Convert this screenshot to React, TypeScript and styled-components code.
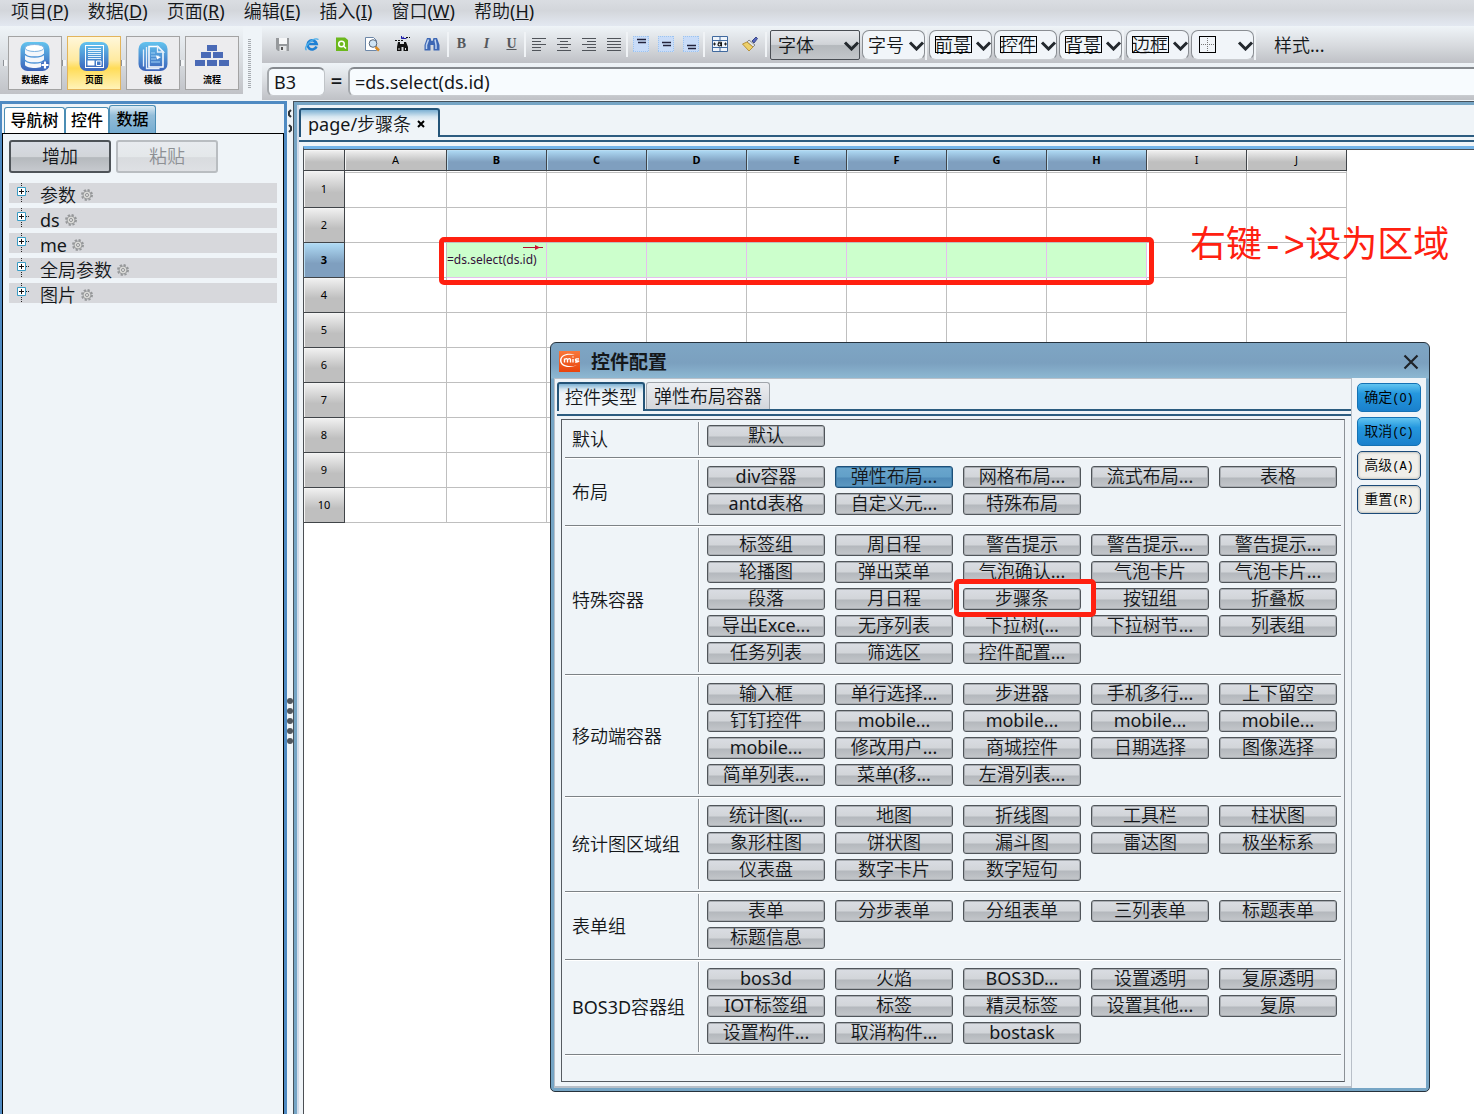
import React from 'react';
import styled, { createGlobalStyle, css } from 'styled-components';

const UI_FONT = `'Noto Sans', 'Noto Sans CJK SC DemiLight', 'Noto Sans CJK SC', sans-serif`;
const BOLD_FONT = `'Noto Sans', 'Noto Sans CJK SC', sans-serif`;
const pane = '#eff4f8';

const Global = createGlobalStyle`
  * { box-sizing: border-box; }
  body { margin: 0; background: #fff; color: #14171a; font: 400 18px/24px ${UI_FONT}; }
  button, input, select { font: inherit; color: inherit; margin: 0; padding: 0; }
  button { cursor: pointer; }
`;

const Page = styled.div`
  position: relative;
  display: flex;
  flex-direction: column;
  min-height: 100vh;
  overflow: hidden;
  background: ${pane};
`;

/* ---------- menu ---------- */
const MenuBar = styled.nav`
  display: flex;
  gap: 19px;
  height: 26px;
  padding: 0 11px 4px;
  background: linear-gradient(#dadde2, #d3d6db 40%, #e3e8f1);
`;
const MenuItem = styled.button`
  border: 0;
  background: none;
  line-height: 22px;
  white-space: nowrap;
`;

/* ---------- toolbars ---------- */
const Bars = styled.div`
  display: flex;
  height: 75px;
`;
const MainBar = styled.div`
  display: flex;
  gap: 5px;
  width: 243px;
  height: 68px;
  padding: 10px 0 0 8px;
  background: linear-gradient(#eff4f8, #d9dde1 50%, #c0c2c7);
`;
const BigButton = styled.button<{ $on?: boolean }>`
  position: relative;
  display: flex;
  flex-direction: column;
  align-items: center;
  width: 54px;
  height: 54px;
  padding-top: 4px;
  border: 1px solid ${p => (p.$on ? '#e2b45c' : '#a3a3a3')};
  background: ${p => (p.$on ? 'linear-gradient(#fff7da, #ffeaa0 45%, #ffdc58 60%, #fff3b8)' : '#ececee')};
  color: #000;
  font-family: ${BOLD_FONT};
  font-size: 9px;
  font-weight: 700;
  line-height: 14px;
  &::before {
    content: '';
    position: absolute;
    left: -6px;
    top: 23px;
    width: 3px;
    height: 6px;
    border-left: 1px solid #8e9297;
    background: #f4f6f8;
  }
`;
const Grip = styled.div`
  width: 19px;
  padding: 13px 0 0 5px;
  &::before {
    content: '';
    display: block;
    width: 3px;
    height: 49px;
    background: repeating-linear-gradient(#a6abb0 0 1px, transparent 1px 2px);
  }
`;
const RightBars = styled.div`
  flex: 1;
  min-width: 0;
`;
const FormatBar = styled.div`
  display: flex;
  align-items: center;
  height: 37px;
  padding-left: 5px;
  white-space: nowrap;
  background: linear-gradient(#eff4f8, #d9dce0 50%, #bfc1c6);
`;
const ToolButton = styled.button<{ $wide?: boolean }>`
  flex: none;
  display: flex;
  align-items: center;
  justify-content: center;
  width: ${p => (p.$wide ? 30 : 25)}px;
  height: 28px;
  padding-bottom: 2px;
  border: 0;
  background: none;
`;
const Sep = styled.span`
  flex: none;
  width: 2px;
  height: 25px;
  background: #f0f3f6;
`;
const Picks = styled.div`
  display: flex;
  align-items: center;
  gap: 2px;
  margin-left: 3px;
`;
const PickBox = styled.label<{ $dark?: boolean }>`
  position: relative;
  display: block;
  width: ${p => (p.$dark ? 90 : 63)}px;
  height: 30px;
  select {
    appearance: none;
    width: 100%;
    height: 30px;
    padding-left: ${p => (p.$dark ? 7 : 5)}px;
    line-height: 24px;
    border: ${p => (p.$dark ? '1px solid #4a4e54' : '1px solid #8a8e93')};
    border-radius: ${p => (p.$dark ? 2 : 7)}px;
    background: ${p => (p.$dark ? 'linear-gradient(#e6e8ec, #d0d3d7 48%, #b5b9bd 52%, #c3c6ca)' : '#f1f5f9')};
    border-bottom-color: ${p => (p.$dark ? '#4a4e54' : '#c9ccd0')};
    outline: 0;
  }
  svg { position: absolute; right: 0; top: 11px; pointer-events: none; }
`;
const Swatch = styled.i<{ $grid?: boolean }>`
  position: absolute;
  left: ${p => (p.$grid ? 8 : 6)}px;
  top: 6px;
  width: ${p => (p.$grid ? 17 : 37)}px;
  height: 17px;
  border: 1px solid #000;
  pointer-events: none;
  &::before, &::after {
    content: '';
    display: ${p => (p.$grid ? 'block' : 'none')};
    position: absolute;
  }
  &::before { left: 7px; top: 1px; bottom: 1px; border-left: 1px dotted #777; }
  &::after { top: 7px; left: 1px; right: 1px; border-top: 1px dotted #777; }
`;
const PickGroup = styled.div`
  display: flex;
  align-items: center;
  gap: 2px;
  border-right: 2px solid #f0f3f6;
`;
const StyleButton = styled.button`
  margin-left: 18px;
  border: 0;
  background: none;
`;
const FormulaBar = styled.div`
  display: flex;
  align-items: center;
  height: 37px;
  padding: 0 0 1px 5px;
  background: linear-gradient(#eff4f8, #d9dce0 50%, #bfc1c6);
`;
const fieldLook = css`
  height: 29px;
  border: 2px solid #8a8e93;
  border-width: 2px 1px 1px 2px;
  border-color: #85898e #c0c4c8 #c9ccd0 #a4a8ac;
  background: #f7fbfe;
  outline: 0;
`;
const CellName = styled.input`
  ${fieldLook}
  width: 58px;
  padding-left: 5px !important;
  border-radius: 6px;
`;
const Equals = styled.span`
  width: 23px;
  text-align: center;
  font-size: 20px;
  font-weight: 600;
`;
const Formula = styled.input`
  ${fieldLook}
  flex: 1;
  padding-left: 5px !important;
  border-right: 0;
  border-radius: 6px 0 0 6px;
`;

/* ---------- body ---------- */
const Body = styled.div`
  flex: 1;
  display: flex;
`;
const SidePanel = styled.aside`
  display: flex;
  flex-direction: column;
  width: 287px;
  border: solid #4f8ac2;
  border-width: 3px 3px 0 2px;
`;
const SideTabs = styled.div`
  display: flex;
  align-items: flex-end;
  height: 29px;
  padding-left: 2px;
`;
const SideTab = styled.button<{ $on?: boolean; $w: number }>`
  width: ${p => p.$w}px;
  height: ${p => (p.$on ? 28 : 26)}px;
  padding-bottom: 2px;
  border: 1px solid #4b8db4;
  border-bottom: 0;
  border-radius: 3px 3px 0 0;
  background: ${p => (p.$on ? 'linear-gradient(#dcebf4, #93bdd9 35%, #76acd0)' : '#fff')};
  color: #000;
  font-family: ${BOLD_FONT};
  font-size: 16px;
  font-weight: 500;
  line-height: 22px;
  white-space: nowrap;
`;
const SideBox = styled.div`
  flex: 1;
  padding: 6px 6px 0 6px;
  border: solid #000;
  border-width: 1px 1px 0;
`;
const SideActions = styled.div`
  display: flex;
  gap: 5px;
  margin-bottom: 10px;
`;
const SideAction = styled.button`
  width: 102px;
  height: 33px;
  padding-bottom: 2px;
  border: 2px solid #4e5358;
  border-radius: 3px;
  background: linear-gradient(#d8dce4, #d2d5d9 50%, #b5b9bd 54%, #c6c9ce);
  &:disabled {
    color: #8d9094;
    border-color: #b9bdc1;
    background: linear-gradient(#e8ebef, #e4e8ea 50%, #d8dbde 54%, #dee0e4);
  }
`;
const Tree = styled.ul`
  display: flex;
  flex-direction: column;
  gap: 5px;
  margin: 0;
  padding: 0;
  list-style: none;
`;
const TreeRow = styled.li`
  display: flex;
  height: 20px;
  padding-left: 8px;
  background: #d7d8dc;
  white-space: nowrap;
  svg.node { flex: none; margin-right: 9px; }
  svg.gear { margin: 6px 0 0 5px; }
`;
const Splitter = styled.div`
  position: relative;
  display: flex;
  flex-direction: column;
  align-items: center;
  justify-content: center;
  gap: 4px;
  width: 6px;
  padding-top: 226px;
  i { width: 6px; height: 6px; border-radius: 50%; background: #4f565e; }
`;
const SplitArrows = styled.svg`
  position: absolute;
  left: 0;
  top: 7px;
`;
const Editor = styled.main`
  flex: 1;
  min-width: 0;
  display: flex;
  flex-direction: column;
  padding: 3px 0 0 5px;
  border-top: 1px solid #46525c;
  border-left: 1px solid #46525c;
  box-shadow: inset 3px 3px #76a5c5, inset 5px 3px #d3dcea;
`;
const PageTabs = styled.div`
  height: 32px;
  padding-top: 3px;
  border-bottom: 2px solid #2c5c80;
`;
const PageTab = styled.div`
  display: flex;
  align-items: center;
  gap: 6px;
  width: 141px;
  height: 29px;
  padding-left: 7px;
  border: 2px solid #245478;
  border-bottom: 0;
  border-radius: 3px 3px 0 0;
  background: linear-gradient(#7db1d3, #d7e7f1 25%, ${pane} 40%);
  white-space: nowrap;
`;
const CloseTab = styled.button`
  display: flex;
  border: 0;
  background: none;
`;
const SheetFrame = styled.div`
  flex: 1;
  display: flex;
  margin-top: 3px;
  padding: 4px 0 0 4px;
  border-top: 2px solid #2c5c80;
`;
const Sheet = styled.div`
  flex: 1;
  padding-top: 1px;
  background: #fff;
  border-top: 3px solid #74b4e8;
  border-left: 1px solid #4b4f54;
  box-shadow: inset 0 1px #4b4f54;
`;
const Grid = styled.table`
  border-spacing: 0;
  table-layout: fixed;
  width: 1043px;
  color: #000;
  font-size: 11px;
  line-height: 14px;
`;
const head = (on?: boolean) => css`
  padding: 0;
  text-align: center;
  font-weight: ${on ? 700 : 400};
  border: solid #404448;
  border-width: 0 1px 1px 0;
  box-shadow: inset 1px 1px ${on ? '#b8dcf2' : '#f4f4f4'};
  background: ${on ? 'linear-gradient(#b0dcf6, #7f9fbf 60%)' : 'linear-gradient(#f2f2f2, #bfbfbf 60%)'};
`;
const ColHead = styled.th<{ $on?: boolean }>`
  ${p => head(p.$on)}
  height: 21px;
`;
const RowHead = styled.th<{ $on?: boolean }>`
  ${p => head(p.$on)}
  height: 35px;
`;
const GridRow = styled.tr<{ $first?: boolean }>`
  height: ${p => (p.$first ? 37 : 35)}px;
  td { ${p => p.$first && css`box-shadow: inset 0 1px #fff, inset 0 2px #bfbfbf;`} }
`;
const Cell = styled.td<{ $area?: boolean }>`
  position: relative;
  padding: 0;
  border: solid ${p => (p.$area ? '#e6bfee' : '#bfbfbf')};
  border-width: 0 1px 1px 0;
  background: ${p => (p.$area ? '#ccffcc' : '#fff')};
  color: #33103a;
  font-size: 12px;
  white-space: nowrap;
  svg { position: absolute; right: 3px; top: 1px; }
`;

/* ---------- annotations ---------- */
const Mark = styled.div<{ $x: number; $y: number; $w: number; $h: number }>`
  position: absolute;
  left: ${p => p.$x}px;
  top: ${p => p.$y}px;
  width: ${p => p.$w}px;
  height: ${p => p.$h}px;
  border: 5px solid #ff2010;
  border-radius: 5px;
  pointer-events: none;
`;
const Note = styled.div`
  position: absolute;
  left: 1190px;
  top: 224px;
  color: #ff2010;
  font: 400 36px/48px 'Liberation Mono', 'Noto Sans CJK SC', sans-serif;
  white-space: nowrap;
`;

/* ---------- dialog ---------- */
const Dialog = styled.section`
  position: absolute;
  left: 550px;
  top: 342px;
  width: 880px;
  border: 1px solid #26323c;
  border-radius: 6px 6px 5px 5px;
  padding: 0 3px 3px;
  background: linear-gradient(#7ea6c4, #7ba0bf 20px, #8db8d2 35px, #76a5c5 36px);
`;
const TitleBar = styled.header`
  display: flex;
  align-items: center;
  height: 35px;
  padding: 2px 7px 0 5px;
  h2 {
    flex: 1;
    margin: 0 0 0 11px;
    font-family: ${BOLD_FONT};
    font-size: 19px;
    font-weight: 700;
    line-height: 28px;
  }
  button { display: flex; border: 0; background: none; }
`;
const DialogBody = styled.div`
  display: flex;
  background: ${pane};
`;
const DialogMain = styled.div`
  flex: 1;
  padding: 3px 0 4px 2px;
  border: 1px solid #b8bfc8;
  border-width: 1px 1px 2px 1px;
`;
const DialogTabs = styled.div`
  display: flex;
  gap: 1px;
  align-items: flex-end;
  height: 29px;
  border-bottom: 2px solid #2c5c80;
`;
const DialogTab = styled.button<{ $on?: boolean }>`
  height: ${p => (p.$on ? 29 : 27)}px;
  margin-bottom: ${p => (p.$on ? -2 : 0)}px;
  padding: 0 ${p => (p.$on ? 6 : 7)}px ${p => (p.$on ? 2 : 0)}px;
  border: ${p => (p.$on ? '2px solid #245478' : '1px solid #a0a5ab')};
  border-bottom: 0;
  border-radius: 3px 3px 0 0;
  background: ${p => (p.$on ? `linear-gradient(#7db1d3, #d7e7f1 20%, ${pane} 35%)` : 'linear-gradient(#eceef2, #d3d6db)')};
  white-space: nowrap;
`;
const Panel = styled.div`
  margin-top: 3px;
  border-top: 2px solid #2c5c80;
`;
const Groups = styled.div`
  margin: 3px 6px 0 4px;
  padding-bottom: 26px;
  border: 1px solid #565b61;
  border-right-color: #8b9096;
`;
const Group = styled.div`
  display: grid;
  grid-template-columns: 137px 1fr;
  margin: 0 3px;
  border-bottom: 1px solid #7d8286;
  box-shadow: 0 1px #fff;
`;
const GroupName = styled.div`
  display: flex;
  align-items: center;
  width: 134px;
  margin: 2px 0;
  padding-left: 7px;
  border-right: 1px solid #8b9096;
  box-shadow: 1px 0 #fff;
  white-space: nowrap;
`;
const Kinds = styled.div<{ $first?: boolean }>`
  display: grid;
  grid-template-columns: repeat(5, 118px);
  gap: 5px 10px;
  padding: ${p => (p.$first ? 5 : 8)}px 0 10px 5px;
`;
const Kind = styled.button<{ $on?: boolean }>`
  height: 22px;
  padding-bottom: 2px;
  border: 1px solid ${p => (p.$on ? '#1d4f78' : '#50555a')};
  border-radius: 3px;
  box-shadow: inset 0 0 0 1px ${p => (p.$on ? '#4482ae' : '#a9adb2')};
  background: ${p => (p.$on ? 'linear-gradient(#6aa6cd, #62a0c8 50%, #4f8bb8 55%, #5e99c2)' : 'linear-gradient(#dadde3, #d2d5d9 50%, #b4b8bd 55%, #c4c7cb)')};
  line-height: 18px;
  white-space: nowrap;
`;
const Actions = styled.div`
  display: flex;
  flex-direction: column;
  gap: 5px;
  padding: 5px 5px 0;
`;
const Action = styled.button<{ $primary?: boolean }>`
  width: 64px;
  height: 29px;
  padding-top: 2px;
  border: ${p => (p.$primary ? '1px solid #1572b4' : '1px solid #1b4a78')};
  border-radius: 5px;
  background: ${p => (p.$primary ? 'linear-gradient(#62c4f0, #2598de 35%, #1a80cc)' : '#f0efea')};
  box-shadow: ${p => (p.$primary ? 'none' : 'inset 0 0 2px 1px #c4c4be')};
  color: #000;
  font-family: 'Liberation Mono', 'Noto Sans CJK SC DemiLight', 'Noto Sans CJK SC', monospace;
  font-size: 14px;
  line-height: 24px;
  white-space: nowrap;
  small { font-size: 12px; }
`;

/* ---------- drawings ---------- */
const Chevron = () => (
  <svg width="17" height="10" viewBox="0 0 17 10"><path d="M2 1.5 8.5 8 15 1.5" fill="none" stroke="#23282d" strokeWidth="3" /></svg>
);
const Tile = ({ children }: { children: React.ReactNode }) => (
  <svg width="32" height="32" viewBox="0 0 32 32">
    <defs><linearGradient id="tile" x2="0" y2="1"><stop stopColor="#63c3ee" /><stop offset="1" stopColor="#3a62ba" /></linearGradient></defs>
    {children}
  </svg>
);
const bigIcons: Record<string, React.ReactNode> = {
  db: <Tile><rect x="1.5" y="1" width="29" height="29" rx="7" fill="url(#tile)" />
    <path d="M6 7v17c2 4 17 4 19 0V7" fill="#f4f7fb" /><ellipse cx="15.5" cy="7" rx="9.5" ry="3.5" fill="#fff" stroke="#7db3e2" />
    <path d="M6 13c2 4 17 4 19 0M6 19c2 4 17 4 19 0" fill="none" stroke="#4f95d8" strokeWidth="1.5" /><path d="M26 20v8M22 24h8" stroke="#3e6bc0" strokeWidth="5" /><path d="M26 20.5v7M22.5 24h7" stroke="#fff" strokeWidth="2.2" /></Tile>,
  page: <Tile><rect x="1.5" y="1" width="29" height="29" rx="7" fill="url(#tile)" />
    <rect x="7.5" y="4.5" width="18" height="22" fill="none" stroke="#fff" /><path d="M10 7.5h13M10 9.5h13M10 11.500h13M10 13.500h13M10 15.500h13M10 17.500h13" stroke="#e4f1fb" /><path d="M9.500 19.500h7v5h-7z" fill="#fff" /><path d="M18.500 20h4.500v4.500h-4.500z" fill="none" stroke="#fff" /></Tile>,
  tpl: <Tile><rect x="1.5" y="1" width="29" height="29" rx="7" fill="url(#tile)" />
    <path d="M12 5.500h9l5 5V26H12z" fill="none" stroke="#fff" strokeWidth="1.5" /><path d="M20.500 5.500v5.500h6zM9.500 6v21.500h13M6.500 8.500v17" fill="none" stroke="#e5effa" strokeWidth="1.300" /><path d="M14 12h4M14 15h8M14 18h5M14 21h9" stroke="#9fd0f5" /><path d="M19 14.500l5 1.500-4 2.500z" fill="#fff" /></Tile>,
  flow: <svg width="38" height="32" viewBox="0 0 38 32"><path d="M14 4h10v6H14zM8 11h10v6H8zM20 11h10v6H20zM2 19h10v6H2zM14 19h10v6H14zM26 19h10v6H26z" fill="#4a6ab6" /></svg>,
};
const Svg = ({ children, s = 16 }: { children: React.ReactNode; s?: number }) => (
  <svg width={s} height={s} viewBox="0 0 16 16">{children}</svg>
);
const fileTools: [string, React.ReactNode][] = [
  ['保存', <Svg><path d="M2 2h13v13H4l-2-2z" fill="#96999c" /><path d="M5 2h8v6H5z" fill="#f6f7f8" /><path d="M5.500 10h7v5h-7z" fill="#e2e4e6" /><path d="M7 11h2v3H7z" fill="#555" /></Svg>],
  ['浏览', <Svg><path d="M12.500 10.500A4.600 4.600 0 1 1 12.700 8H5" fill="none" stroke="#1f80d4" strokeWidth="2.600" /><path d="M2.500 14C-1.500 12 9 .500 14.500 3.500" fill="none" stroke="#4caeea" strokeWidth="1.400" /></Svg>],
  ['预览', <Svg><path d="M2 1.500h9l3 2.500v11H2z" fill="#6cb81c" /><circle cx="7.500" cy="8" r="2.800" fill="none" stroke="#fff" strokeWidth="1.500" /><path d="m9.500 10 2.500 2.500" stroke="#fff" strokeWidth="1.500" /></Svg>],
  ['打印预览', <Svg><path d="M1.500 1.500h8l3 3v10h-11z" fill="#fff" stroke="#6c87a8" /><circle cx="9" cy="7.500" r="3.800" fill="#cfe4f5" stroke="#56657a" /><path d="m11.500 11 3.500 3.500" stroke="#d98a22" strokeWidth="2.500" /></Svg>],
  ['替换', <Svg><path d="M4 6h2v2h4V6h2l2 5v4H9.500v-4h-2v4H3v-4z" fill="#111" /><path d="M5 12v2M11.500 12v2" stroke="#ddd" /><path d="M1 4.500h8M12 1.500h4" stroke="#111" strokeDasharray="2 1" /><path d="M7.500 2.500h5M7.500 2.500V0M7.500 2.500 10 1" stroke="#1d1da8" /></Svg>],
  ['查找', <Svg><path d="M3 2h3.500l1 3h1l1-3H13l2.500 7v5.500H9.500V9h-3v5.500H.500V9z" fill="#3d67b4" /><path d="M4.500 3.500 2.500 9v4M11 3.500 12 9v4" fill="none" stroke="#bfd4f2" strokeWidth="1.500" /></Svg>],
];
const LetterIcon = styled.span<{ $k: string }>`
  color: #55585c;
  font: ${p => (p.$k === 'I' ? 'italic' : 'normal')} 700 14px/16px 'Liberation Serif', serif;
  text-decoration: ${p => (p.$k === 'U' ? 'underline' : 'none')};
`;
const alignPaths = [
  'M1 2.500h14M1 5.500h9M1 8.500h14M1 11.500h9',
  'M1 2.500h14M4 5.500h8M1 8.500h14M4 11.500h8',
  'M1 2.500h14M6 5.500h9M1 8.500h14M6 11.500h9',
  'M1 2.500h14M1 5.500h14M1 8.500h14M1 11.500h14',
];
const Valign = ({ y }: { y: number }) => (
  <Svg><path d="M0 0h16v16H0z" fill="#c9dcf8" /><path d="M0 .500h16M.500 0v16M15.500 0v16M0 15.500h16" stroke="#9cc4f0" strokeDasharray="1 1" /><path d={`M4 ${y + 0.5}h9M5 ${y + 3.5}h8`} stroke="#23233c" strokeWidth="1.500" /></Svg>
);
const NodeMark = () => (
  <svg className="node" width="14" height="20" viewBox="0 0 14 20"><path d="M4.500 0v20M9 8.500h4" stroke="#222" strokeDasharray="1 1" /><path d="M.500 4.500h8v8h-8z" fill="#fff" stroke="#3a9cc4" /><path d="M2 8.500h5M4.500 6v5" stroke="#111" /></svg>
);
const Gear = () => (
  <svg className="gear" width="12" height="12" viewBox="0 0 12 12"><circle cx="6" cy="6" r="5" fill="none" stroke="#96989a" strokeWidth="2" strokeDasharray="2.200 1.727" /><circle cx="6" cy="6" r="4" fill="#d9d9d6" stroke="#9a9c9e" /><circle cx="6" cy="6" r="1.500" fill="#eee" stroke="#8f9193" /></svg>
);
const Logo = () => (
  <svg width="21" height="21" viewBox="0 0 21 21"><defs><linearGradient id="logo" x2="0" y2="1"><stop stopColor="#f8773a" /><stop offset="1" stopColor="#e9440c" /></linearGradient></defs>
    <path d="M0 0h21v21H0z" fill="url(#logo)" /><path d="M16 4C9 1 1 4 1 9.500S9 18.500 18 14C12 16.500 2.500 15 2.500 9.500S9 3 16 4z" fill="#fff" /><path d="M5.500 11.500V7.500M5.500 8.500q3-2 3 .500v2.500M8.500 8.500q3-2 3 .500v2.500M14 8v3.500M14 5.500v1M20 8q-3.500-.500-3.500.800T19 10t-2.800 1.300" fill="none" stroke="#fff" strokeWidth="1.400" /></svg>
);

/* ---------- data ---------- */
const menus = [['项目', 'P'], ['数据', 'D'], ['页面', 'R'], ['编辑', 'E'], ['插入', 'I'], ['窗口', 'W'], ['帮助', 'H']];
const cols = 'ABCDEFGHIJ'.split('');
const groups: [string, string[]][] = [
  ['默认', ['默认']],
  ['布局', ['div容器', '弹性布局...', '网格布局...', '流式布局...', '表格', 'antd表格', '自定义元...', '特殊布局']],
  ['特殊容器', ['标签组', '周日程', '警告提示', '警告提示...', '警告提示...', '轮播图', '弹出菜单', '气泡确认...', '气泡卡片', '气泡卡片...', '段落', '月日程', '步骤条', '按钮组', '折叠板', '导出Exce...', '无序列表', '下拉树(...', '下拉树节...', '列表组', '任务列表', '筛选区', '控件配置...']],
  ['移动端容器', ['输入框', '单行选择...', '步进器', '手机多行...', '上下留空', '钉钉控件', 'mobile...', 'mobile...', 'mobile...', 'mobile...', 'mobile...', '修改用户...', '商城控件', '日期选择', '图像选择', '简单列表...', '菜单(移...', '左滑列表...']],
  ['统计图区域组', ['统计图(...', '地图', '折线图', '工具栏', '柱状图', '象形柱图', '饼状图', '漏斗图', '雷达图', '极坐标系', '仪表盘', '数字卡片', '数字短句']],
  ['表单组', ['表单', '分步表单', '分组表单', '三列表单', '标题表单', '标题信息']],
  ['BOS3D容器组', ['bos3d', '火焰', 'BOS3D...', '设置透明', '复原透明', 'IOT标签组', '标签', '精灵标签', '设置其他...', '复原', '设置构件...', '取消构件...', 'bostask']],
];

const Pick = ({ name, dark, swatch, grid }: { name: string; dark?: boolean; swatch?: boolean; grid?: boolean }) => (
  <PickBox $dark={dark}>
    <select aria-label={name}><option>{grid ? '' : name}</option></select>
    {(swatch || grid) && <Swatch $grid={grid} />}
    <Chevron />
  </PickBox>
);

export default function App() {
  return (
    <Page>
      <Global />
      <MenuBar>
        {menus.map(([t, k]) => <MenuItem key={k}>{t}(<u>{k}</u>)</MenuItem>)}
      </MenuBar>
      <Bars>
        <MainBar>
          <BigButton>{bigIcons.db}数据库</BigButton>
          <BigButton $on>{bigIcons.page}页面</BigButton>
          <BigButton>{bigIcons.tpl}模板</BigButton>
          <BigButton>{bigIcons.flow}流程</BigButton>
        </MainBar>
        <Grip />
        <RightBars>
          <FormatBar>
            {fileTools.map(([n, icon]) => <ToolButton $wide key={n} aria-label={n}>{icon}</ToolButton>)}
            <Sep />
            {['B', 'I', 'U'].map(k => <ToolButton key={k}><LetterIcon $k={k}>{k}</LetterIcon></ToolButton>)}
            <Sep />
            {alignPaths.map((d, i) => <ToolButton key={d} aria-label={`对齐${i + 1}`}><Svg><path d={`${d}M1 14.500h${[9, 14, 14, 14][i]}`} stroke="#50545a" /></Svg></ToolButton>)}
            <Sep />
            {[3, 6, 9].map(y => <ToolButton key={y} aria-label={`垂直对齐${y}`}><Valign y={y} /></ToolButton>)}
            <Sep />
            <ToolButton $wide aria-label="合并单元格"><Svg><path d="M.500.500h15v15H.500zM.500 4.500h15M.500 11.500h15M8 .500v4M8 11.500v4" fill="#eef4fb" stroke="#40699e" /><path d="M1 8h3M12 8h3M2.500 6.500v3M13.500 6.500v3" stroke="#222" /><circle cx="7.500" cy="8.500" r="1.500" fill="none" stroke="#111" strokeWidth="1.200" /><path d="M6 6.200h3.500V10.500" fill="none" stroke="#111" /></Svg></ToolButton>
            <ToolButton $wide aria-label="格式刷"><Svg><path d="m10 5 4-4 1.500 1.500L12 7z" fill="#5567c0" stroke="#3e4a88" /><path d="m7 4 6 5-2 2-6-5z" fill="#dfe3ea" stroke="#888" /><path d="M.500 8 5 6l6 5-4 4z" fill="#edd06a" stroke="#b8923a" /></Svg></ToolButton>
            <Sep />
            <Picks>
              <Pick name="字体" dark />
              <PickGroup>
                <Pick name="字号" />
              </PickGroup>
              <PickGroup>
                <Pick name="前景" swatch />
                <Pick name="控件" swatch />
                <Pick name="背景" swatch />
              </PickGroup>
              <PickGroup>
                <Pick name="边框" swatch />
                <Pick name="框线" grid />
              </PickGroup>
            </Picks>
            <StyleButton>样式...</StyleButton>
          </FormatBar>
          <FormulaBar>
            <CellName aria-label="单元格" defaultValue="B3" />
            <Equals>=</Equals>
            <Formula aria-label="公式" defaultValue="=ds.select(ds.id)" />
          </FormulaBar>
        </RightBars>
      </Bars>

      <Body>
        <SidePanel>
          <SideTabs>
            <SideTab $w={61}>导航树</SideTab>
            <SideTab $w={44}>控件</SideTab>
            <SideTab $w={47} $on>数据</SideTab>
          </SideTabs>
          <SideBox>
            <SideActions>
              <SideAction>增加</SideAction>
              <SideAction disabled>粘贴</SideAction>
            </SideActions>
            <Tree>
              {['参数', 'ds', 'me', '全局参数', '图片'].map(t => (
                <TreeRow key={t}><NodeMark />{t}<Gear /></TreeRow>
              ))}
            </Tree>
          </SideBox>
        </SidePanel>
        <Splitter>
          <SplitArrows width="6" height="26" viewBox="0 0 6 26"><path d="M4 2 2 4v3l2 2M2 17l2 2v3l-2 2" fill="none" stroke="#30353a" strokeWidth="2" /></SplitArrows>
          <i /><i /><i /><i /><i />
        </Splitter>
        <Editor>
          <PageTabs>
            <PageTab>
              page/步骤条
              <CloseTab aria-label="关闭"><svg width="8" height="8" viewBox="0 0 8 8"><path d="m1 1 6 6M7 1 1 7" stroke="#000" strokeWidth="2" /></svg></CloseTab>
            </PageTab>
          </PageTabs>
          <SheetFrame>
            <Sheet>
              <Grid>
                <colgroup>
                  <col style={{ width: 41 }} />
                  <col style={{ width: 102 }} />
                  {cols.slice(1).map(c => <col key={c} style={{ width: 100 }} />)}
                </colgroup>
                <thead>
                  <tr>
                    <ColHead />
                    {cols.map((c, i) => <ColHead key={c} $on={i >= 1 && i <= 7}>{c}</ColHead>)}
                  </tr>
                </thead>
                <tbody>
                  {Array.from({ length: 10 }, (_, r) => (
                    <GridRow key={r} $first={r === 0}>
                      <RowHead $on={r === 2}>{r + 1}</RowHead>
                      {cols.map((c, i) => (
                        <Cell key={c} $area={r === 2 && i >= 1 && i <= 7}>
                          {r === 2 && i === 1 && <>
                            =ds.select(ds.id)
                            <svg width="20" height="7" viewBox="0 0 20 7"><path d="M0 3.500h20" stroke="#b01030" /><path d="m12 1 5 2.500-5 2.500z" fill="#d01030" /></svg>
                          </>}
                        </Cell>
                      ))}
                    </GridRow>
                  ))}
                </tbody>
              </Grid>
            </Sheet>
          </SheetFrame>
        </Editor>
      </Body>

      <Mark $x={439} $y={237} $w={715} $h={48} />
      <Note>右键-&gt;设为区域</Note>

      <Dialog role="dialog" aria-label="控件配置">
        <TitleBar>
          <Logo />
          <h2>控件配置</h2>
          <button aria-label="关闭"><svg width="16" height="16" viewBox="0 0 16 16"><path d="m1.500 1.500 13 13M14.500 1.500l-13 13" stroke="#1f2328" strokeWidth="2.200" /></svg></button>
        </TitleBar>
        <DialogBody>
          <DialogMain>
            <DialogTabs>
              <DialogTab $on>控件类型</DialogTab>
              <DialogTab>弹性布局容器</DialogTab>
            </DialogTabs>
            <Panel>
              <Groups>
                {groups.map(([name, kinds], g) => (
                  <Group key={name}>
                    <GroupName>{name}</GroupName>
                    <Kinds $first={g === 0}>
                      {kinds.map((k, i) => <Kind key={i} $on={g === 1 && i === 1}>{k}</Kind>)}
                    </Kinds>
                  </Group>
                ))}
              </Groups>
            </Panel>
          </DialogMain>
          <Actions>
            <Action $primary>确定<small>(O)</small></Action>
            <Action $primary>取消<small>(C)</small></Action>
            <Action>高级<small>(A)</small></Action>
            <Action>重置<small>(R)</small></Action>
          </Actions>
        </DialogBody>
      </Dialog>
      <Mark $x={954} $y={579} $w={142} $h={38} />
    </Page>
  );
}
